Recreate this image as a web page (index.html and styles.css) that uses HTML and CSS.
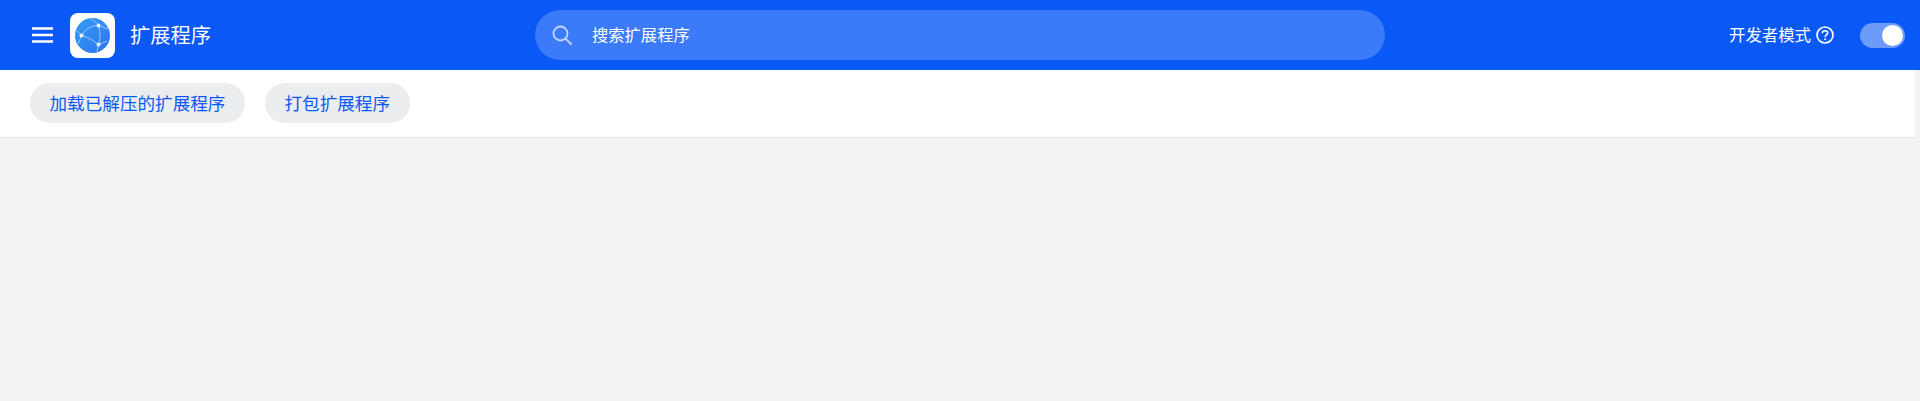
FILE: index.html
```html
<!DOCTYPE html>
<html lang="zh-CN">
<head>
    <meta charset="UTF-8">
    <meta name="viewport" content="width=device-width, initial-scale=1.0">
    <title>扩展程序</title>
    <link rel="stylesheet" href="styles.css">
</head>
<body>
    <header class="top-bar">
        <div class="top-left">
            <button class="menu-btn" type="button" aria-label="菜单">
                <svg viewBox="0 0 21 16" width="21" height="16">
                    <path d="M0 1.5 H21 M0 8 H21 M0 14.5 H21" fill="none" stroke="white" stroke-width="2.4"/>
                </svg>
            </button>
            <div class="logo">
                <svg viewBox="0 0 45 45" width="45" height="45">
                    <defs>
                        <linearGradient id="globeFill" x1="0" y1="0" x2="0.7" y2="1">
                            <stop offset="0" stop-color="#3a9af7"/>
                            <stop offset="1" stop-color="#2a7aef"/>
                        </linearGradient>
                    </defs>
                    <circle cx="22.5" cy="22.5" r="17.5" fill="url(#globeFill)"/>
                    <g fill="none" stroke="#9cc7f9" stroke-width="1">
                        <path d="M11.5 22.5 C16 15 22 12.5 28.5 12.5"/>
                        <path d="M11.5 22.5 C17 24 23 27 28.5 31.5"/>
                        <path d="M28.5 12.5 C30.5 19 30.5 25 28.5 31.5"/>
                        <path d="M28.5 12.5 C26 9.5 23 7 20 5.5"/>
                        <path d="M28.5 12.5 L38 16"/>
                        <path d="M11.5 22.5 L6.5 17"/>
                        <path d="M11.5 22.5 L8 31"/>
                        <path d="M28.5 31.5 L37 28"/>
                        <path d="M28.5 31.5 L27 39.5"/>
                    </g>
                    <g fill="#eaf4ff">
                        <circle cx="11.5" cy="22.5" r="2"/>
                        <circle cx="28.5" cy="12.5" r="2"/>
                        <circle cx="28.5" cy="31.5" r="2"/>
                    </g>
                </svg>
            </div>
            <h1 class="page-title">扩展程序</h1>
        </div>

        <div class="search-box">
            <svg class="search-icon" viewBox="0 0 20 20" width="20" height="20">
                <circle cx="8.5" cy="8.5" r="7" fill="none" stroke="#c3d6fc" stroke-width="1.8"/>
                <path d="M13.8 13.8 L19 19" fill="none" stroke="#c3d6fc" stroke-width="1.8" stroke-linecap="round"/>
            </svg>
            <span class="search-text">搜索扩展程序</span>
        </div>

        <div class="top-right">
            <span class="dev-label">开发者模式</span>
            <svg class="help-icon" viewBox="0 0 18 18" width="18" height="18">
                <circle cx="9" cy="9" r="8" fill="none" stroke="white" stroke-width="1.7"/>
                <path d="M6.3 7.2 C6.3 5.6 7.5 4.7 9 4.7 C10.6 4.7 11.7 5.7 11.7 7 C11.7 8.7 9.1 9 9.1 11" fill="none" stroke="white" stroke-width="1.6"/>
                <circle cx="9.1" cy="13.3" r="1" fill="white"/>
            </svg>
            <div class="toggle"><span class="toggle-knob"></span></div>
        </div>
    </header>

    <div class="tool-bar">
        <button class="pill-btn" type="button">加载已解压的扩展程序</button>
        <button class="pill-btn" type="button">打包扩展程序</button>
    </div>
</body>
</html>
```

FILE: styles.css
```css
* {
    margin: 0;
    padding: 0;
    box-sizing: border-box;
}

body {
    font-family: "Noto Sans CJK SC", "Noto Sans", sans-serif;
    background: #f1f3f5;
    height: 401px;
    overflow: hidden;
}

.top-bar {
    height: 70px;
    background: #0a59f7;
    color: white;
    display: grid;
    grid-template-columns: 1fr 850px 1fr;
    align-items: center;
}

.top-left {
    display: flex;
    align-items: center;
    padding-left: 32px;
}

.menu-btn {
    width: 21px;
    height: 16px;
    margin-right: 1px;
    background: none;
    border: none;
}

.menu-btn svg {
    display: block;
}

.logo {
    width: 45px;
    height: 45px;
    margin-left: 16px;
    background: white;
    border-radius: 8px;
}

.logo svg {
    display: block;
}

.page-title {
    font-size: 20.3px;
    font-weight: 400;
    margin-left: 15px;
    padding-bottom: 2px;
}

.search-box {
    height: 50px;
    background: rgba(255, 255, 255, 0.2);
    border-radius: 25px;
    display: flex;
    align-items: center;
    padding-left: 17px;
}

.search-text {
    font-size: 16.3px;
    margin-left: 20px;
    padding-bottom: 2px;
}

.top-right {
    display: flex;
    align-items: center;
    justify-content: flex-end;
    padding-right: 15px;
}

.dev-label {
    font-size: 16.4px;
    padding-bottom: 2px;
}

.help-icon {
    margin-left: 5px;
}

.toggle {
    width: 45px;
    height: 25px;
    margin-left: 26px;
    padding: 2px;
    background: rgba(255, 255, 255, 0.4);
    border-radius: 13px;
    display: flex;
    justify-content: flex-end;
}

.toggle-knob {
    width: 21px;
    height: 21px;
    background: white;
    border-radius: 50%;
}

.tool-bar {
    width: 1915px;
    height: 68px;
    background: white;
    border-bottom: 1px solid #dfe0e2;
    display: flex;
    align-items: flex-start;
    gap: 20px;
    padding: 13px 0 0 30px;
}

.pill-btn {
    height: 40px;
    padding: 0 19.5px 2px;
    background: #ecedef;
    color: #0a59f7;
    border: none;
    border-radius: 20px;
    font-family: inherit;
    font-size: 17.6px;
}
```
